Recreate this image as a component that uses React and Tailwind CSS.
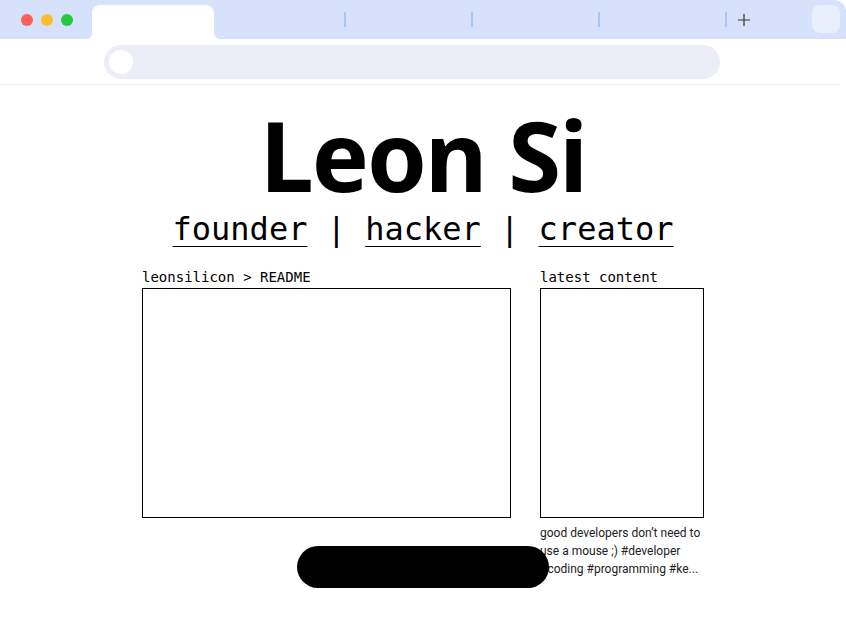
import React from 'react';

const mono = { fontFamily: '"DejaVu Sans Mono", "Liberation Mono", monospace' };

function BrowserChrome() {
  return (
    <div>
      {/* Tab strip */}
      <div className="relative flex h-[39px] items-end rounded-tr-[12px] bg-[#d6e2fb]">
        <div className="flex h-full items-center gap-2 pl-[21px] pr-[19px]">
          <span className="h-3 w-3 rounded-full bg-[#fe5f57]" />
          <span className="h-3 w-3 rounded-full bg-[#febc2e]" />
          <span className="h-3 w-3 rounded-full bg-[#28c840]" />
        </div>
        <div className="relative h-[34px] w-[122px] rounded-t-[8px] bg-white">
          <span className="absolute -left-[6px] bottom-0 h-[6px] w-[6px] bg-white" />
          <span className="absolute -left-[6px] bottom-0 h-[6px] w-[6px] rounded-br-[6px] bg-[#d6e2fb]" />
          <span className="absolute -right-[6px] bottom-0 h-[6px] w-[6px] bg-white" />
          <span className="absolute -right-[6px] bottom-0 h-[6px] w-[6px] rounded-bl-[6px] bg-[#d6e2fb]" />
        </div>
        <div className="flex h-full flex-1 items-center">
          <div className="w-[130px]" />
          <span className="h-[15px] w-[2px] bg-[#a9c6f7]" />
          <div className="w-[125px]" />
          <span className="h-[15px] w-[2px] bg-[#a9c6f7]" />
          <div className="w-[125px]" />
          <span className="h-[15px] w-[2px] bg-[#a9c6f7]" />
          <div className="w-[125px]" />
          <span className="h-[15px] w-[2px] bg-[#a9c6f7]" />
          <svg className="ml-[11px]" width="12" height="12" viewBox="0 0 12 12">
            <path d="M6 0v12M0 6h12" stroke="#333" strokeWidth="1.2" />
          </svg>
        </div>
        <div className="absolute right-[6px] top-[5px] h-[28px] w-[28px] rounded-[8px] bg-[#e8effd]" />
      </div>
      {/* Address bar */}
      <div className="mr-[6px] flex h-[46px] items-center border-b border-[#eeeeee] pl-[104px]">
        <div className="flex h-[34px] w-[616px] items-center rounded-full bg-[#eceef7] pl-[5px]">
          <span className="h-[24px] w-[24px] rounded-full bg-white" />
        </div>
      </div>
    </div>
  );
}

export default function App() {
  return (
    <div className="relative h-[630px] w-[846px] overflow-hidden bg-white">
      <BrowserChrome />

      <div className="flex flex-col items-center">
        <h1
          className="mt-[18px] text-[96px] font-bold leading-[104px] tracking-[-2px] text-black"
          style={{ fontFamily: '"Noto Sans", "Open Sans", sans-serif' }}
        >
          Leon Si
        </h1>
        <div className="whitespace-pre text-[32px] leading-[44px] text-black" style={mono}>
          <a className="underline decoration-1 underline-offset-[6px]">founder</a>
          {' | '}
          <a className="underline decoration-1 underline-offset-[6px]">hacker</a>
          {' | '}
          <a className="underline decoration-1 underline-offset-[6px]">creator</a>
        </div>

        <div className="mt-[16px] flex gap-[29px]">
          <div className="w-[369px]">
            <div className="text-[14px] leading-[21px] text-black" style={mono}>leonsilicon &gt; README</div>
            <div className="h-[230px] border border-black" />
          </div>
          <div className="w-[164px]">
            <div className="text-[14px] leading-[21px] text-black" style={mono}>latest content</div>
            <div className="h-[230px] border border-black" />
            <p
              className="mt-[6px] w-[170px] text-[12px] leading-[18px] text-[#222]"
              style={{ fontFamily: 'Roboto, "Liberation Sans", sans-serif' }}
            >
              good developers don’t need to use a mouse ;) #developer #coding #programming #ke...
            </p>
          </div>
        </div>
      </div>

      {/* floating pill */}
      <div className="absolute left-[297px] top-[546px] h-[42px] w-[252px] rounded-full bg-black" />
    </div>
  );
}
